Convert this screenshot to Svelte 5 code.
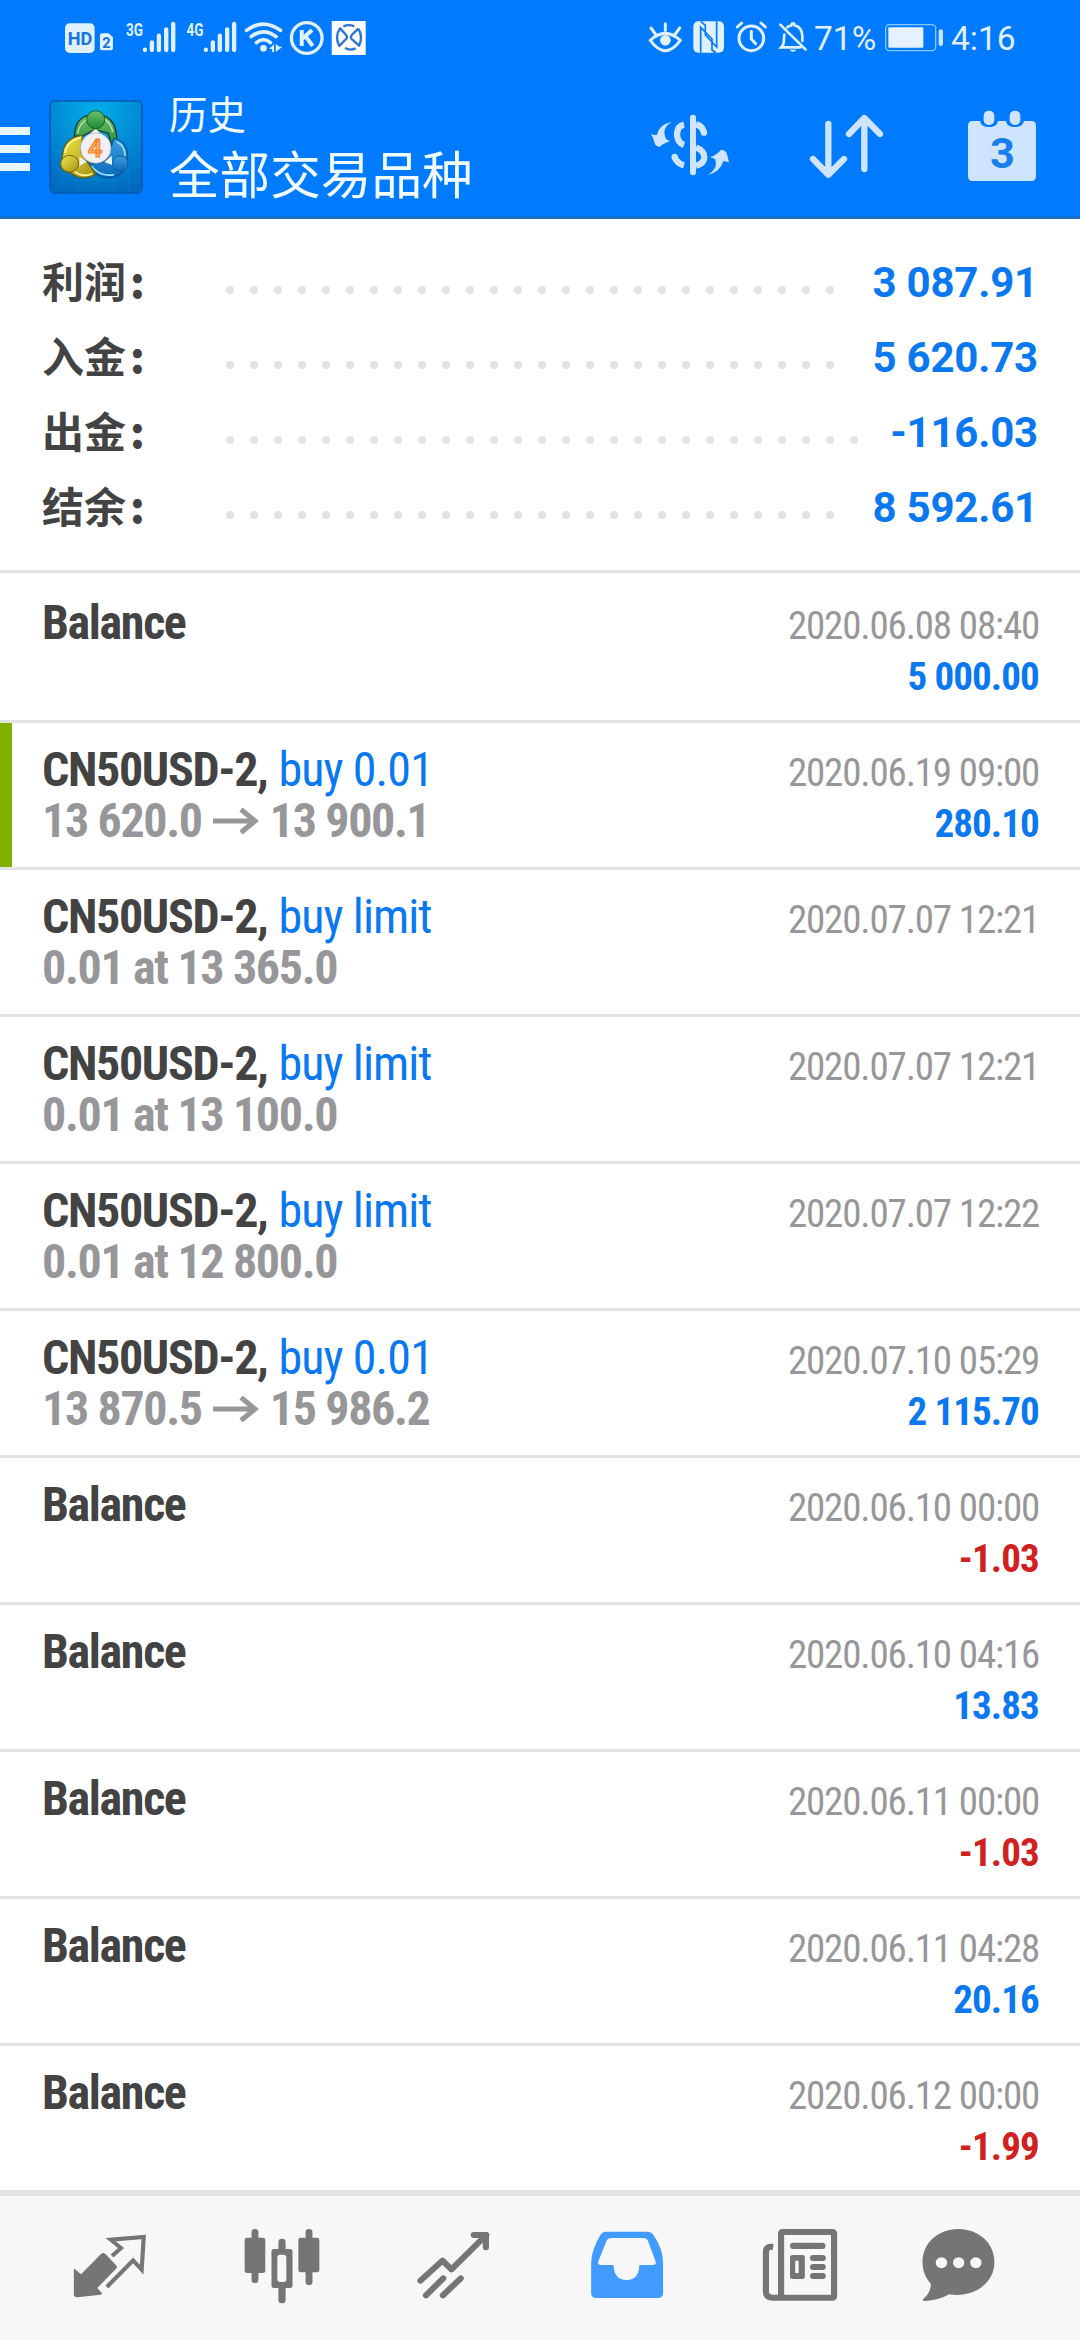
<script>
  const summary = [
    { label: '利润', value: '3 087.91' },
    { label: '入金', value: '5 620.73' },
    { label: '出金', value: '-116.03' },
    { label: '结余', value: '8 592.61' }
  ];
  const dots = Array.from({ length: 30 });

  const entries = [
    { title: 'Balance', date: '2020.06.08 08:40', amount: '5 000.00' },
    { title: 'CN50USD-2,', action: 'buy 0.01', from: '13 620.0', to: '13 900.1', date: '2020.06.19 09:00', amount: '280.10', marked: true },
    { title: 'CN50USD-2,', action: 'buy limit', detail: '0.01 at 13 365.0', date: '2020.07.07 12:21' },
    { title: 'CN50USD-2,', action: 'buy limit', detail: '0.01 at 13 100.0', date: '2020.07.07 12:21' },
    { title: 'CN50USD-2,', action: 'buy limit', detail: '0.01 at 12 800.0', date: '2020.07.07 12:22' },
    { title: 'CN50USD-2,', action: 'buy 0.01', from: '13 870.5', to: '15 986.2', date: '2020.07.10 05:29', amount: '2 115.70' },
    { title: 'Balance', date: '2020.06.10 00:00', amount: '-1.03' },
    { title: 'Balance', date: '2020.06.10 04:16', amount: '13.83' },
    { title: 'Balance', date: '2020.06.11 00:00', amount: '-1.03' },
    { title: 'Balance', date: '2020.06.11 04:28', amount: '20.16' },
    { title: 'Balance', date: '2020.06.12 00:00', amount: '-1.99' }
  ];
</script>

<div class="screen">
  <header>
    <div class="status">
      <svg class="signals" viewBox="60 0 940 240" fill="#dff0ff">
        <rect x="75" y="70" width="89" height="89" rx="14" />
        <text x="83" y="134" class="knock" font-size="57" font-weight="700" textLength="74" lengthAdjust="spacingAndGlyphs">HD</text>
        <path d="M186 100h20l13 12v33q0 6-6 6h-27q-6 0-6-6v-39q0-6 6-6z" />
        <text x="187" y="143" class="knock" font-size="43" font-weight="700" textLength="25" lengthAdjust="spacingAndGlyphs">2</text>
        <text x="258" y="107" font-size="57" font-weight="700" textLength="51" lengthAdjust="spacingAndGlyphs">3G</text>
        <text x="440" y="107" font-size="57" font-weight="700" textLength="51" lengthAdjust="spacingAndGlyphs">4G</text>
        {#each [0, 183] as dx}
          <g stroke="#dff0ff" stroke-width="13" stroke-linecap="round">
            <path d="M{315 + dx} 149v1M{336 + dx} 127v23M{357 + dx} 107v43M{379 + dx} 88v62M{400 + dx} 72v78" />
          </g>
        {/each}
        <g fill="none" stroke="#dff0ff" stroke-width="11" stroke-linecap="round">
          <path d="M620 91q50-38 102 0M634 110q37-29 75 0M650 128q21-18 42 0" />
        </g>
        <circle cx="671" cy="145" r="10" />
        <path d="M688 147l15-15v24h-6v-9zM708 132v24l20-16h-9z" />
        <circle cx="801" cy="114" r="46" fill="none" stroke="#dff0ff" stroke-width="10" />
        <path d="M786 90v48M817 90l-31 28M797 108l22 30" fill="none" stroke="#dff0ff" stroke-width="12" />
        <rect x="876" y="63" width="102" height="102" fill="#fff" />
        <g fill="none" stroke="#2c74d4" stroke-width="7" stroke-linejoin="round">
          <path d="M911 79q16-7 33 0" />
          <path d="M901 85q-17 24-2 53l20-21q5-5 1-11z" />
          <path d="M956 86l-19 18q-7 8 0 14l21 19q13-25-2-51M916 144q15 9 32 1" />
        </g>
      </svg>
      <div class="status-right">
        <svg class="alerts" viewBox="75 0 480 240" fill="none" stroke="#dff0ff" stroke-width="9" stroke-linecap="round">
          <path d="M82 121q44-42 90 0-45 62-90 0zM127 71v20M84 84l13 18M170 84l-13 18" />
          <circle cx="127" cy="121" r="16" fill="#dff0ff" stroke="none" />
          <rect x="211" y="64" width="92" height="94" rx="15" fill="#dff0ff" stroke="none" />
          <path d="M233 158V82l34 35v33l12 9M281 64v77l-34-36V76l-13-11" stroke="#007aff" stroke-width="5" stroke-linecap="butt" />
          <circle cx="385" cy="115" r="37" />
          <path d="M385 94v23l13 14M343 81l13-12M427 81l-13-12" />
          <path d="M472 74l76 75M484 104c-3 21 2 28-9 38h57M493 82q6-5 12-6c1-8 9-8 10 0q22 6 23 31v16" stroke-width="8" />
          <path d="M500 149h20q-9 13-20 0z" fill="#dff0ff" stroke="none" />
        </svg>
        <span class="battery-text">71%</span>
        <svg class="battery" viewBox="786 60 180 105">
          <rect x="791" y="74" width="150" height="78" rx="11" fill="none" stroke="#86c8ff" stroke-width="4" />
          <rect x="799" y="82" width="105" height="61" rx="3" fill="#e5f1ff" />
          <rect x="950" y="88" width="13" height="50" rx="6" fill="#c9e5ff" />
        </svg>
        <span class="clock">4:16</span>
      </div>
    </div>
    <div class="appbar">
      <div class="menu"><i></i><i></i><i></i></div>
      <svg class="logo" viewBox="147 59 282 282">
        <defs>
          <radialGradient id="tile" cx=".5" cy=".1" r=".95"><stop offset="0" stop-color="#00aeea" /><stop offset="1" stop-color="#0068bd" /></radialGradient>
          <linearGradient id="green" x2="0" y2="1"><stop stop-color="#6fbf6c" /><stop offset="1" stop-color="#1c8a35" /></linearGradient>
          <linearGradient id="gold" x2="1" y2="1"><stop stop-color="#f3e84a" /><stop offset="1" stop-color="#a48f12" /></linearGradient>
          <linearGradient id="azure" x2="0" y2="1"><stop stop-color="#3d9ee0" /><stop offset="1" stop-color="#0a69b8" /></linearGradient>
        </defs>
        <rect x="150" y="62" width="276" height="276" rx="14" fill="url(#tile)" stroke="#0859b4" stroke-width="5" />
        <path d="M192 66v268M233 66v268M292 66v268M340 66v268M385 66v268M154 110h268M154 160h268M154 210h268M154 260h268M154 300h268" stroke="#25a9e5" stroke-opacity=".22" stroke-width="2" />
        <g stroke="#173b32" stroke-width="4">
          <path d="M223 168q2-53 41-63h45q38 14 41 64 0 22-12 35l-13-45-40-11-34 17z" fill="url(#green)" />
          <path d="M233 160q5-33 31-44M338 155q-5-25-23-38" fill="none" stroke="#c4ebb2" stroke-width="4" />
          <path d="M342 174q38 9 41 50-2 58-46 68-49 4-76-43l57-3z" fill="url(#azure)" stroke="#0b559f" />
          <path d="M350 184q25 12 25 43M275 258q25 33 67 25" fill="none" stroke="#91dfff" stroke-width="5" />
          <path d="M248 165q-53 7-59 50l-6 42q4 17 29 20 37 29 75 4l-24-35-21-32z" fill="url(#gold)" stroke="#6a5d12" />
          <path d="M243 171q-43 10-48 47M224 273q24 20 53 7" fill="none" stroke="#fff79a" stroke-width="5" />
        </g>
        <path d="M271 158l16-13 15 14zM238 229l22 15-22 14zM335 226l-22 20 24 8z" fill="#eaf5ea" />
        <circle cx="287" cy="118" r="27" fill="url(#green)" stroke="#13632c" stroke-width="3" />
        <ellipse cx="209" cy="250" rx="27" ry="25" fill="url(#gold)" stroke="#716711" stroke-width="3" />
        <circle cx="361" cy="250" r="23" fill="url(#azure)" stroke="#13609b" stroke-width="3" />
        <circle cx="287" cy="203" r="46" fill="#f0f0f4" stroke="#a5a3aa" stroke-width="2" />
        <text x="263" y="230" font-size="77" font-weight="700" fill="#ffaf68" stroke="#f08023" stroke-width="3">4</text>
      </svg>
      <div class="titles">
        <span class="sub">历史</span>
        <span class="main">全部交易品种</span>
      </div>
      <div class="actions">
        <svg class="money" viewBox="90 75 240 240" fill="#cfe4ff">
          <path d="M156 126q-34 18-17 52l11 6q-14 3-32 17-12-3-14-11-2-12-11-29 10 6 18 3 7-32 45-38zM263 285q33-20 22-48l-15-6q21-6 33-22 15 1 18 14l6 24-17-4q-9 33-47 42z" />
          <rect x="210" y="104" width="18" height="182" rx="9" />
          <path d="M192 134q-20 4-21 29 1 25 21 32M163 230q9 21 29 26M228 133q19 4 24 25M228 202q25 10 25 30-1 19-25 25" fill="none" stroke="#cfe4ff" stroke-width="19" />
          <circle cx="252" cy="158" r="9.500" /><circle cx="164" cy="231" r="9.500" />
        </svg>
        <svg class="sort" viewBox="560 75 240 240" fill="none" stroke="#cfe4ff" stroke-width="19" stroke-linecap="round" stroke-linejoin="round">
          <path d="M624 132v151M578 237l46 47 47-47M732 267V116M686 162l46-48 47 48" />
        </svg>
        <svg class="calendar" viewBox="1026 75 240 240" fill="#cfe4ff">
          <path d="M1058 123h22q3 18 27 18t27-18h24q3 18 27 18t27-18h22q14 0 14 14v152q0 14-14 14h-176q-14 0-14-14V137q0-14 14-14z" />
          <rect x="1091" y="92" width="32" height="43" rx="15" /><rect x="1169" y="92" width="32" height="43" rx="15" />
          <text x="1147" y="265" font-size="130" font-weight="700" text-anchor="middle" class="day">3</text>
        </svg>
      </div>
    </div>
  </header>

  <section class="summary">
    {#each summary as row}
      <div class="sum-row">
        <span class="label">{row.label}<b>:</b></span>
        <div class="dots">{#each dots as _}<i></i>{/each}</div>
        <span class="value">{row.value}</span>
      </div>
    {/each}
  </section>

  <main>
    {#each entries as e}
      <article class:marked={e.marked}>
        <div class="left">
          <div class="line"><b>{e.title}</b>{#if e.action}<span class="action">{e.action}</span>{/if}</div>
          {#if e.detail}<div class="detail">{e.detail}</div>{/if}
          {#if e.from}
            <div class="detail trade">
              <span>{e.from}</span>
              <svg viewBox="0 0 46 26" fill="none" stroke="#979799" stroke-width="5"><path d="M0 13H42M28 1.500L42 13 28 24.500" /></svg>
              <span>{e.to}</span>
            </div>
          {/if}
        </div>
        <div class="right">
          <span class="date">{e.date}</span>
          {#if e.amount}<span class="amount" class:neg={e.amount.startsWith('-')}>{e.amount}</span>{/if}
        </div>
      </article>
    {/each}
  </main>

  <nav>
    <svg viewBox="198 144 244 240" preserveAspectRatio="none">
      <path d="M215 265l21 18 57-60q7-7 14-1l30 33q6 6 0 12l-54 57 13 14q3 5-4 6l-66 8q-11 1-11-9z" />
      <path d="M326 228l26-24-30-25 96-8-6 98-25-28-76 80" fill="none" stroke="#757575" stroke-width="12" />
    </svg>
    <svg viewBox="698.4 144 244 240" preserveAspectRatio="none">
      <rect x="729" y="147" width="20" height="162" rx="10" /><rect x="709" y="173" width="60" height="106" rx="7" />
      <rect x="886" y="147" width="20" height="168" rx="10" /><rect x="865" y="173" width="61" height="104" rx="7" />
      <rect x="807" y="176" width="21" height="194" rx="10" /><rect x="787" y="207" width="61" height="117" rx="7" />
      <rect x="804" y="224" width="26" height="82" rx="8" fill="#f7f7f7" />
    </svg>
    <svg viewBox="1199.3 144 244 240" preserveAspectRatio="none" fill="none">
      <path class="stroke" d="M1221 302l64-60 26 26 101-103M1376 165h35v37M1237 346l50-51M1286 346l52-51" />
    </svg>
    <svg class="active" viewBox="132.1 144 244 240" preserveAspectRatio="none">
      <path fill-rule="evenodd" d="M192 155h118q12 0 18 10 28 42 28 84v90q0 15-15 15H162q-15 0-15-15v-90q0-38 27-84 6-10 18-10zM204 174q-9 0-12 8l-24 62q-3 11 8 11h36q2 45 38 45t37-45h39q11 0 8-11l-22-62q-3-8-12-8z" />
    </svg>
    <svg viewBox="633 144 244 240" preserveAspectRatio="none" fill="none">
      <path d="M677 201q-21-3-21 15v118q0 19 18 19h174q6 0 6-6V162q0-6-6-6H706q-6 0-6 6v191" stroke="#757575" stroke-width="18" />
      <rect x="726" y="188" width="103" height="19" rx="9" />
      <path fill-rule="evenodd" d="M733 225h29q7 0 7 7v58q0 7-7 7h-29q-7 0-7-7v-58q0-7 7-7zM741 242v37h10v-37z" />
      <rect x="784" y="225" width="46" height="18" rx="9" /><rect x="784" y="252" width="46" height="18" rx="9" /><rect x="784" y="279" width="46" height="18" rx="9" />
    </svg>
    <svg viewBox="1093 144 244 240" preserveAspectRatio="none">
      <path d="M1213 147c60 0 105 43 105 99 0 62-57 108-131 97-22 13-45 19-70 20q-11-1-6-6 23-20 22-46c-15-17-24-39-24-65 0-56 45-99 104-99z" />
      <g fill="#f7f7f7"><circle cx="1164" cy="248" r="16.500" /><circle cx="1214" cy="248" r="16.500" /><circle cx="1264" cy="248" r="16.500" /></g>
    </svg>
  </nav>
</div>

<style>
  :global(body) { background: #fff; }
  .screen {
    width: 1080px; height: 2340px; overflow: hidden; display: flex; flex-direction: column;
    font-family: Roboto, "Noto Sans CJK SC", sans-serif; background: #fff; color: #434343;
  }
  svg { display: block; flex: none; }
  svg text { font-family: Roboto, sans-serif; }
  header { height: 216px; background: #007aff; border-bottom: 3px solid #176fc9; }
  .knock { fill: #1874dc; }
  .status { height: 80px; display: flex; justify-content: space-between; padding: 0 65px 0 60px; }
  .signals { width: 313px; height: 80px; }
  .status-right { display: flex; align-items: center; height: 80px; color: #e2f1ff; font-size: 33.500px; line-height: 76px; }
  .alerts { width: 160px; height: 80px; }
  .battery-text { margin-left: 6px; width: 70px; margin-top: -2px; }
  .battery { width: 60px; height: 35px; margin-top: -5px; }
  .clock { margin-left: 7px; width: 64px; margin-top: -2px; }
  .appbar { display: flex; height: 136px; }
  .menu { width: 30px; padding-top: 47px; display: flex; flex-direction: column; gap: 10px; }
  .menu i { height: 8px; background: #e8f7ff; }
  .logo { width: 94px; height: 94px; margin: 20px 0 0 19px; }
  .titles { margin-left: 26px; flex: 1; display: flex; flex-direction: column; color: #f0fbff; font-family: "Noto Sans CJK SC", sans-serif; white-space: nowrap; }
  .sub { font-size: 38.500px; line-height: 50px; margin-top: 7px; }
  .main { font-size: 50.600px; line-height: 60px; margin-top: 5px; }
  .actions { display: flex; padding: 25px 38px 0 0; }
  .actions svg { width: 80px; height: 80px; }
  .actions .sort { margin-left: 77px; }
  .actions .calendar { margin-left: 75px; }
  .day { fill: #187ff0; }

  .summary { padding: 26px 42px 25px; border-bottom: 3px solid #e3e3e3; }
  .sum-row { display: flex; height: 75px; }
  .label { width: 176px; font: 700 42px/69px "Noto Sans CJK SC", sans-serif; white-space: nowrap; }
  .label b { margin-left: 4px; }
  .dots { flex: 1; height: 24px; margin-top: 33px; overflow: hidden; display: flex; flex-wrap: wrap; }
  .dots i { width: 8px; height: 8px; margin: 8px; border-radius: 50%; background: #e3e3e3; }
  .value { margin-left: 16px; font-size: 42px; line-height: 75px; font-weight: 700; letter-spacing: -.2px; color: #0a78f0; white-space: nowrap; }

  main { padding-top: 3px; font-stretch: 75%; font-family: "Roboto Condensed", Roboto, sans-serif; }
  article { height: 144px; border-bottom: 3px solid #e3e3e3; display: flex; justify-content: space-between; padding: 0 42px; }
  article.marked { background: linear-gradient(#80b000, #80b000) 0 0 / 12px 100% no-repeat; background-clip: padding-box; }
  .left { padding-top: 21px; font-size: 48px; line-height: 51px; letter-spacing: -1.350px; white-space: nowrap; }
  .line { display: flex; gap: 11px; }
  .action { color: #0a78f0; letter-spacing: -.9px; }
  .detail { color: #979799; font-weight: 700; }
  .trade { display: flex; align-items: center; gap: 11px; }
  .trade svg { width: 46px; height: 26px; }
  .right { padding-top: 25px; font-size: 39px; line-height: 51px; display: flex; flex-direction: column; align-items: flex-end; white-space: nowrap; }
  .date { color: #979799; letter-spacing: -1.150px; margin-right: -1.150px; }
  .amount { color: #0a78f0; font-weight: 700; letter-spacing: -.900px; margin-right: -.900px; }
  .amount.neg { color: #d12020; }

  nav { flex: 1; border-top: 3px solid #e3e3e3; background: #f7f7f7; display: flex; align-items: center; padding-left: 68px; gap: 88.500px; }
  nav svg { width: 84px; height: 80px; fill: #757575; }
  nav svg:last-child { margin-left: -14px; }
  nav .stroke { fill: none; stroke: #757575; stroke-width: 18; stroke-linecap: round; stroke-linejoin: round; }
  nav path[stroke] { fill: none; }
  nav svg.active { fill: #429cff; }
</style>
